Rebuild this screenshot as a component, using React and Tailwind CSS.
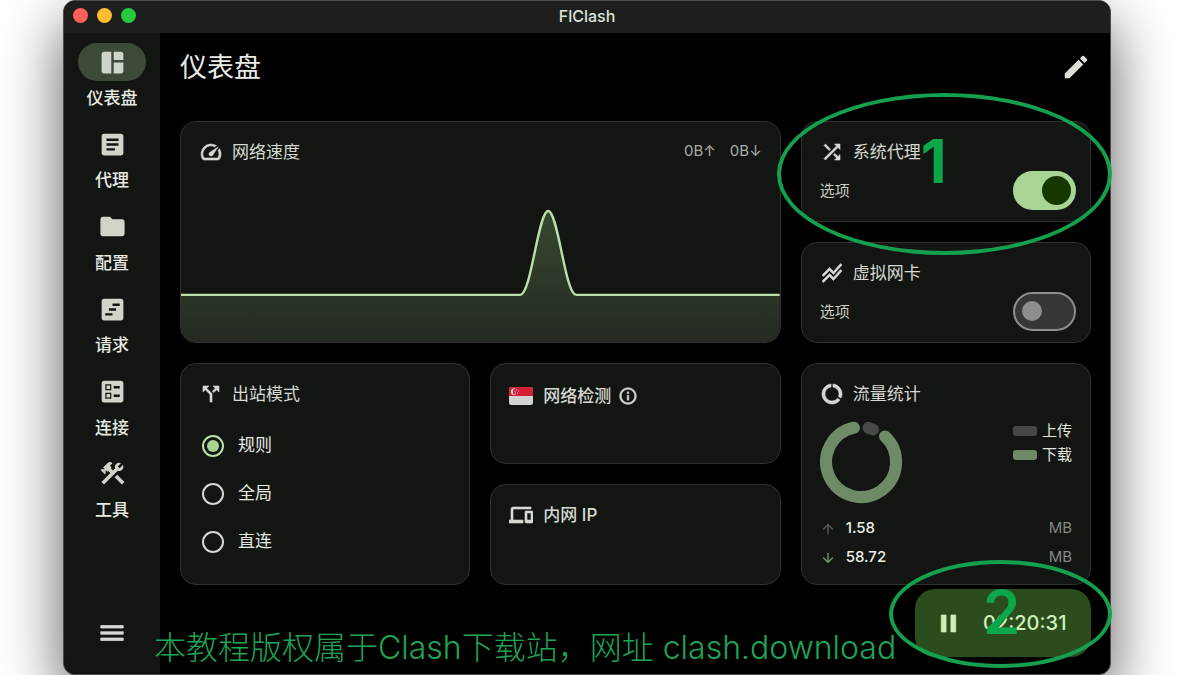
import React from "react";
import {
  MdSpaceDashboard, MdArticle, MdFolder, MdViewTimeline, MdBallot, MdConstruction, MdMenu, MdEdit,
  MdSpeed, MdShuffle, MdStackedLineChart, MdCallSplit, MdInfoOutline, MdDevices, MdDataUsage,
  MdPause, MdArrowUpward, MdArrowDownward,
} from "react-icons/md";

const NAV = [
  { label: "仪表盘", Icon: MdSpaceDashboard, active: true },
  { label: "代理", Icon: MdArticle },
  { label: "配置", Icon: MdFolder },
  { label: "请求", Icon: MdViewTimeline },
  { label: "连接", Icon: MdBallot },
  { label: "工具", Icon: MdConstruction },
];

// Thickens an icon's shapes, leaving its empty bounding path alone.
const BOLD_ICON = "[&_path:not([fill=none])]:stroke-[0.6]";

function Card({ className = "", children }) {
  return (
    <section className={`relative rounded-2xl border border-[#2f312e] bg-[#121512] ${className}`}>
      {children}
    </section>
  );
}

function CardTitle({ icon, children }) {
  return (
    <h2 className="flex h-6 items-center gap-[9px] text-[17px] leading-6 text-[#d6d9d2]">
      <span className={`flex w-6 justify-center text-2xl ${BOLD_ICON}`}>{icon}</span>
      {children}
    </h2>
  );
}

function Toggle({ id, label, defaultChecked }) {
  return (
    <div className="flex items-center justify-between">
      <label htmlFor={id} className="text-[15px] leading-5 text-[#c9ccc5]">选项</label>
      <span className="relative h-[39px] w-[63px]">
        <input
          id={id}
          type="checkbox"
          role="switch"
          aria-label={label}
          defaultChecked={defaultChecked}
          className="peer h-full w-full appearance-none rounded-full border-2 border-[#8b8e89] bg-[#343733] checked:border-[#a9d594] checked:bg-[#a9d594]"
        />
        <span className="pointer-events-none absolute left-[9px] top-[9px] size-5 rounded-full bg-[#8b8e89] peer-checked:left-[29px] peer-checked:top-[5px] peer-checked:size-[29px] peer-checked:bg-[#153800]" />
      </span>
    </div>
  );
}

function SpeedChart() {
  const curve = "M0 88.500H340C351 88.500 358 4 368 4S385 88.500 396 88.500H600";
  return (
    <svg viewBox="0 0 600 136" preserveAspectRatio="none" className="block h-[135px] w-full" aria-hidden="true">
      <defs>
        <linearGradient id="speed-fill" x1="0" y1="0" x2="0" y2="1">
          <stop offset="0" stopColor="#36482f" />
          <stop offset="1" stopColor="#242a22" />
        </linearGradient>
      </defs>
      <path d={`${curve}V136H0Z`} fill="url(#speed-fill)" />
      <path d={curve} fill="none" stroke="#bbdfa9" strokeWidth="2.400" />
    </svg>
  );
}

function SingaporeFlag() {
  return (
    <svg viewBox="0 0 24 18" className="h-[18px] w-6" aria-hidden="true">
      <defs>
        <clipPath id="flag-shape"><rect width="24" height="18" rx="2.500" /></clipPath>
      </defs>
      <g clipPath="url(#flag-shape)">
        <rect width="24" height="18" fill="#d2d3d2" />
        <rect width="24" height="9" fill="#d22036" />
        <circle cx="5.300" cy="4.700" r="3.300" fill="#eee" />
        <circle cx="6.700" cy="4.700" r="3" fill="#d22036" />
        <g fill="#eee">
          <circle cx="7.500" cy="2.700" r=".5" /><circle cx="5.900" cy="4" r=".5" /><circle cx="9.100" cy="4" r=".5" />
          <circle cx="6.500" cy="5.900" r=".5" /><circle cx="8.500" cy="5.900" r=".5" />
        </g>
      </g>
    </svg>
  );
}

function TrafficRing() {
  return (
    <svg viewBox="1 -1 84 84" className="size-[84px] overflow-visible" fill="none" strokeWidth="12" strokeLinecap="round" aria-hidden="true">
      <path d="M66 16.400A35 35 0 1 1 35 7.700" stroke="#6f8a66" />
      <path d="M49.500 7.800L54 9.500" stroke="#464846" />
    </svg>
  );
}

function TrafficRow({ icon, value }) {
  return (
    <div className="flex h-[29px] items-center text-[15px]">
      <span className="w-[26px] text-base">{icon}</span>
      <span className="flex-1 font-medium text-[#eceee8]">{value}</span>
      <span className="text-[#858783]">MB</span>
    </div>
  );
}

function Sidebar() {
  return (
    <aside className="flex w-24 shrink-0 flex-col items-center justify-between rounded-bl-xl bg-[#121512] pb-[21px] pt-[10px]">
      <nav className="flex h-[479px] flex-col justify-between">
        {NAV.map(({ label, Icon, active }) => (
          <a key={label} href="#" aria-current={active ? "page" : undefined} className="flex flex-col items-center gap-[5px]">
            <span className={`flex h-[38px] w-[68px] items-center justify-center rounded-full text-[29px] text-[#d0d5ca] ${active ? "bg-[#3c4b37]" : ""}`}>
              <Icon />
            </span>
            <span className="text-[17px] font-medium leading-6 text-[#e6e9e2]">{label}</span>
          </a>
        ))}
      </nav>
      <button type="button" aria-label="菜单" className={`flex size-10 items-center justify-center text-3xl text-[#d6d9d2] ${BOLD_ICON}`}>
        <MdMenu />
      </button>
    </aside>
  );
}

export default function App() {
  return (
    <div className="flex min-h-screen overflow-hidden bg-white pl-[63px] pr-[89px] font-['Inter','Noto_Sans_CJK_SC',sans-serif]">
      <div className="flex min-w-0 flex-1 flex-col rounded-xl border border-[#4a4c4a] bg-black shadow-[0_24px_60px_0_rgba(0,0,0,0.65)]">
        <header className="relative flex h-8 shrink-0 items-center justify-center rounded-t-xl bg-[#1c1f1b]">
          <div className="absolute left-[9px] top-[7px] flex gap-[9px]">
            <button type="button" aria-label="关闭" className="size-[15px] rounded-full bg-[#ff5f57]" />
            <button type="button" aria-label="最小化" className="size-[15px] rounded-full bg-[#febc2e]" />
            <button type="button" aria-label="缩放" className="size-[15px] rounded-full bg-[#28c840]" />
          </div>
          <span className="pb-[2px] text-base font-medium text-[#dfe1dc]">FlClash</span>
        </header>

        <div className="flex flex-1">
          <Sidebar />
          <main className="relative min-w-0 flex-1 pl-5 pr-[19px]">
            <div className="flex h-[68px] items-center justify-between">
              <h1 className="pt-[2px] text-[27px] text-[#e9ebe5]">仪表盘</h1>
              <button type="button" aria-label="编辑" className="text-3xl text-[#dcdfd8]"><MdEdit /></button>
            </div>

            <div className="mt-5 grid auto-rows-[101px] grid-cols-3 gap-5">
              <Card className="col-span-2 row-span-2 flex flex-col justify-between overflow-hidden">
                <div className="flex items-center justify-between px-[18px] pt-[18px]">
                  <CardTitle icon={<MdSpeed />}>网络速度</CardTitle>
                  <p className="flex gap-[14px] pb-[2px] text-[15px] text-[#a9aca6]"><span>0B↑</span><span>0B↓</span></p>
                </div>
                <SpeedChart />
              </Card>

              <Card className="z-10 pl-[18px] pr-[14px] pt-[18px]">
                <CardTitle icon={<MdShuffle />}>系统代理</CardTitle>
                <div className="mt-[7px]"><Toggle id="system-proxy" label="系统代理" defaultChecked /></div>
                <div className="pointer-events-none absolute -bottom-[34px] -left-[25px] -right-[22px] -top-[29px] rounded-[50%] border-4 border-[#14a04e]" />
                <span className="pointer-events-none absolute left-[119px] top-[9px] text-6xl font-bold text-[#0ca74a]">1</span>
              </Card>

              <Card className="pl-[18px] pr-[14px] pt-[18px]">
                <CardTitle icon={<MdStackedLineChart />}>虚拟网卡</CardTitle>
                <div className="mt-[7px]"><Toggle id="virtual-nic" label="虚拟网卡" /></div>
              </Card>

              <Card className="row-span-2 px-[18px] pt-[18px]">
                <CardTitle icon={<MdCallSplit />}>出站模式</CardTitle>
                <div className="mt-4 flex flex-col">
                  {["规则", "全局", "直连"].map((mode, i) => (
                    <label key={mode} className="flex h-12 items-center gap-[14px] pl-[3px] text-[17px] text-[#e6e9e2]">
                      <input
                        type="radio"
                        name="outbound-mode"
                        defaultChecked={i === 0}
                        className="flex size-[22px] appearance-none items-center justify-center rounded-full border-2 border-[#d6d9d2] before:size-3 before:rounded-full checked:border-[#b9dfa6] checked:before:bg-[#a9d594]"
                      />
                      {mode}
                    </label>
                  ))}
                </div>
              </Card>

              <Card className="px-[18px] pt-5">
                <h2 className="flex h-6 items-center text-[17px] font-medium leading-6 text-[#d6d9d2]">
                  <SingaporeFlag />
                  <span className="ml-[10px]">网络检测</span>
                  <button type="button" aria-label="详情" className={`ml-[7px] text-xl ${BOLD_ICON}`}><MdInfoOutline /></button>
                </h2>
              </Card>

              <Card className="row-span-2 px-[18px] pt-[18px]">
                <CardTitle icon={<MdDataUsage />}>流量统计</CardTitle>
                <div className="mt-[13px] flex justify-between">
                  <TrafficRing />
                  <ul className="text-[15px] leading-6 text-[#e0e3dc]">
                    <li className="flex items-center gap-[5px]"><span className="h-[10px] w-6 rounded-[3px] bg-[#464846]" />上传</li>
                    <li className="flex items-center gap-[5px]"><span className="h-[10px] w-6 rounded-[3px] bg-[#6f8a66]" />下载</li>
                  </ul>
                </div>
                <div className="mt-[11px]">
                  <TrafficRow icon={<MdArrowUpward className="text-[#5c5e5b]" />} value="1.58" />
                  <TrafficRow icon={<MdArrowDownward className="text-[#7d9a73]" />} value="58.72" />
                </div>
              </Card>

              <Card className="px-[18px] pt-[18px]">
                <h2 className={`flex h-6 items-center gap-[10px] text-[17px] font-medium leading-6 text-[#d6d9d2] ${BOLD_ICON}`}>
                  <MdDevices className="text-2xl" />内网 IP
                </h2>
              </Card>
            </div>

            <div className="absolute bottom-[17px] right-[19px] z-10">
              <button type="button" className="flex h-[68px] w-44 items-center rounded-[20px] bg-[#2b4c1c] pl-[19px] text-xl font-medium text-[#cdf0b9]">
                <span className={`text-[29px] ${BOLD_ICON}`}><MdPause /></span>
                <span className="ml-5">02:20:31</span>
              </button>
              <div className="pointer-events-none absolute -bottom-[11px] -left-[26px] -right-[21px] -top-[29px] rounded-[50%] border-4 border-[#14a04e]" />
              <span className="pointer-events-none absolute -top-[7px] left-[68px] text-6xl font-semibold text-[#0ca74a]">2</span>
            </div>

            <p className="absolute -left-[6px] bottom-[6px] z-10 whitespace-nowrap text-[32px] font-light leading-10 text-[#1da556]">
              本教程版权属于Clash下载站，网址 clash.download
            </p>
          </main>
        </div>
      </div>
    </div>
  );
}
